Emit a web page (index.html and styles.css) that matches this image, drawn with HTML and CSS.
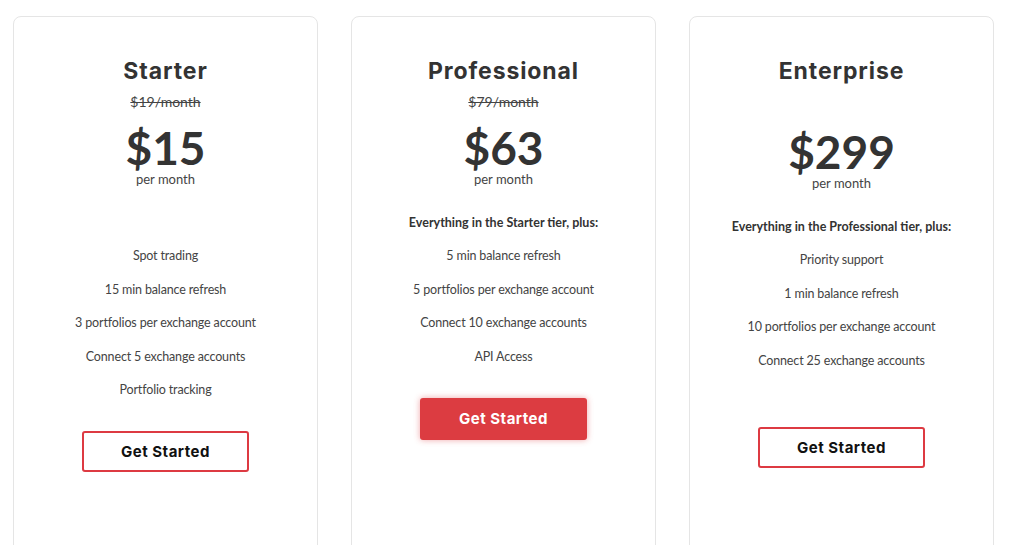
FILE: index.html
```html
<!DOCTYPE html>
<html lang="en">
<head>
<meta charset="utf-8">
<title>Pricing</title>
<link rel="stylesheet" href="styles.css">
</head>
<body>
<main class="plans">
  <section class="card">
    <h2 class="plan-name">Starter</h2>
    <div class="old-price">$19/month</div>
    <div class="price">$15</div>
    <div class="period">per month</div>
    <p class="lead"></p>
    <ul class="features">
      <li>Spot trading</li>
      <li>15 min balance refresh</li>
      <li>3 portfolios per exchange account</li>
      <li>Connect 5 exchange accounts</li>
      <li>Portfolio tracking</li>
    </ul>
    <a class="btn btn-outline" href="#">Get Started</a>
  </section>
  <section class="card">
    <h2 class="plan-name">Professional</h2>
    <div class="old-price">$79/month</div>
    <div class="price">$63</div>
    <div class="period">per month</div>
    <p class="lead">Everything in the Starter tier, plus:</p>
    <ul class="features">
      <li>5 min balance refresh</li>
      <li>5 portfolios per exchange account</li>
      <li>Connect 10 exchange accounts</li>
      <li>API Access</li>
    </ul>
    <a class="btn btn-filled" href="#">Get Started</a>
  </section>
  <section class="card card-enterprise">
    <h2 class="plan-name">Enterprise</h2>
    <div class="old-price old-price-empty"></div>
    <div class="price">$299</div>
    <div class="period">per month</div>
    <p class="lead">Everything in the Professional tier, plus:</p>
    <ul class="features">
      <li>Priority support</li>
      <li>1 min balance refresh</li>
      <li>10 portfolios per exchange account</li>
      <li>Connect 25 exchange accounts</li>
    </ul>
    <a class="btn btn-outline" href="#">Get Started</a>
  </section>
</main>
</body>
</html>
```
FILE: styles.css
```css
* { box-sizing: border-box; }

html, body {
  margin: 0;
  padding: 0;
  background: #ffffff;
}

body {
  font-family: "Lato", "Liberation Sans", sans-serif;
  color: #444444;
  overflow: hidden;
  height: 545px;
}

.plans {
  display: flex;
  gap: 33px;
  padding: 16px 0 0 13px;
}

.card {
  width: 305px;
  height: 600px;
  border: 1px solid #e5e5e5;
  border-radius: 8px;
  display: flex;
  flex-direction: column;
  align-items: center;
  text-align: center;
  padding-top: 39px;
}

.plan-name {
  margin: 0;
  font-family: "Inter", "Liberation Sans", sans-serif;
  font-weight: 700;
  font-size: 23px;
  line-height: 30px;
  letter-spacing: 0.9px;
  color: #333333;
}

.old-price {
  margin-top: 7px;
  height: 18px;
  font-size: 14px;
  line-height: 18px;
  text-decoration: line-through;
  color: #444444;
}

.old-price-empty {
  height: 22px;
}

.price {
  margin-top: 17px;
  font-size: 46px;
  line-height: 40px;
  font-weight: 700;
  color: #333333;
}

.period {
  margin-top: 4px;
  font-size: 13px;
  line-height: 15px;
  color: #444444;
}

.lead {
  margin: 27px 0 0;
  min-height: 17px;
  font-size: 12.5px;
  line-height: 17px;
  font-weight: 700;
  color: #333333;
}

.features {
  list-style: none;
  margin: 16px 0 0;
  padding: 0;
  display: flex;
  flex-direction: column;
  gap: 16.5px;
  font-size: 12.5px;
  letter-spacing: -0.15px;
  line-height: 17px;
}

.btn {
  display: flex;
  align-items: center;
  justify-content: center;
  width: 167px;
  height: 41px;
  margin-top: 33px;
  border-radius: 3px;
  font-family: "Inter", "Liberation Sans", sans-serif;
  font-weight: 700;
  font-size: 15px;
  letter-spacing: 0.5px;
  text-decoration: none;
}

.btn-outline {
  border: 2px solid #dd3a42;
  color: #111111;
  background: #ffffff;
}

.btn-filled {
  height: 42px;
  background: #dc3c41;
  color: #ffffff;
  box-shadow: 0 0 6px rgba(220, 60, 65, 0.45);
}

.card-enterprise .btn {
  margin-top: 58px;
}
```
